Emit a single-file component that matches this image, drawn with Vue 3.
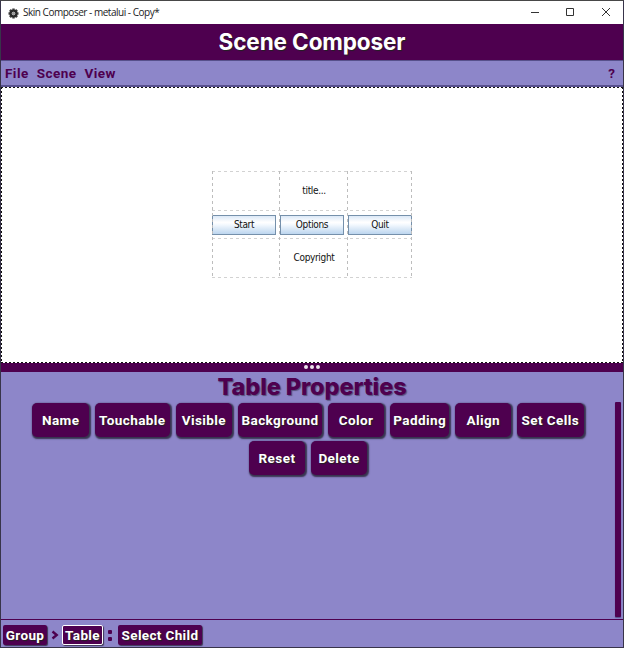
<script setup>
const menus = ['File', 'Scene', 'View']
const cells = [
  { text: '' }, { text: 'title...' }, { text: '' },
  { text: 'Start', button: true }, { text: 'Options', button: true }, { text: 'Quit', button: true },
  { text: '' }, { text: 'Copyright' }, { text: '' },
]
const rows = [
  [
    { text: 'Name', width: 56.5 }, { text: 'Touchable', width: 75.5 }, { text: 'Visible', width: 56.5 },
    { text: 'Background', width: 84.5 }, { text: 'Color', width: 56.5 }, { text: 'Padding', width: 59.5 },
    { text: 'Align', width: 56.5 }, { text: 'Set Cells', width: 66.5 },
  ],
  [{ text: 'Reset', width: 56.5 }, { text: 'Delete', width: 56.5 }],
]
const teeth = [0, 45, 90, 135, 180, 225, 270, 315]
</script>

<template>
  <div class="window">
    <header class="titlebar">
      <svg class="gear" viewBox="0 0 12 12">
        <rect v-for="a in teeth" :key="a" x="4.7" y="0.5" width="2.6" height="3" :transform="`rotate(${a} 6 6)`" fill="#444" />
        <circle cx="6" cy="6" r="3.2" fill="none" stroke="#292929" stroke-width="2.5" />
        <circle cx="6" cy="6" r="1.8" fill="#999" />
      </svg>
      <span class="caption">Skin Composer - metalui - Copy*</span>
      <svg class="controls" viewBox="0 0 84 12" fill="none" stroke="#333">
        <path d="M1 5.5h8M36.5 1.5h7v7h-7zM72 1l8 8M80 1l-8 8" />
      </svg>
    </header>
    <h1 class="banner"><span>Scene Composer</span></h1>
    <nav class="menubar">
      <span v-for="m in menus" :key="m" :class="['menu', m.toLowerCase()]">{{ m }}</span>
      <span class="help">?</span>
    </nav>
    <main class="stage">
      <div class="table">
        <div v-for="(c, i) in cells" :key="i" class="cell">
          <span :class="c.button ? 'metal' : 'label'">{{ c.text }}</span>
        </div>
        <svg class="guides" viewBox="0 0 200 107" fill="none" stroke-dasharray="3 3">
          <path stroke="#d2d2d2" d="M0 .5H200M0 39.5H200M0 67.5H200M0 106.5H200" />
          <path stroke="#bdbdbd" d="M.5 0V107M67.5 0V107M135.5 0V107M199.5 0V107" />
        </svg>
      </div>
    </main>
    <div class="splitter"><i></i><i></i><i></i></div>
    <section class="properties">
      <h2>Table Properties</h2>
      <div class="body">
        <div class="buttons">
          <div v-for="(r, i) in rows" :key="i" class="row">
            <button v-for="b in r" :key="b.text" :style="{ width: b.width + 'px' }">{{ b.text }}</button>
          </div>
        </div>
        <div class="scrollbar"></div>
      </div>
    </section>
    <footer class="path">
      <span class="crumb group">Group</span>
      <svg class="arrow" viewBox="0 0 8 10"><path d="M1.5 1.5L5.7 5L1.5 8.5" fill="none" stroke="#4e004f" stroke-width="2.4" /></svg>
      <span class="crumb current">Table</span>
      <span class="colon"><i></i><i></i></span>
      <span class="crumb child">Select Child</span>
    </footer>
  </div>
</template>

<style>
body { margin: 0; }
</style>

<style scoped>
* { box-sizing: border-box; }
.window {
  width: 624px; height: 648px; overflow: hidden;
  display: flex; flex-direction: column;
  border: 1px solid #38344a; border-top-color: #484848;
  background: #8d86c9; color: #4e004f;
  font-family: Roboto, "Liberation Sans", sans-serif; font-weight: 700;
}
.titlebar { height: 23px; flex: none; display: flex; align-items: center; background: #fff; padding-left: 7px; }
.gear { width: 11px; height: 11px; margin-top: 1px; }
.caption { font: 400 10px/14px "Open Sans", sans-serif; color: #222; margin-left: 4px; margin-top: -1px; letter-spacing: -0.48px; white-space: nowrap; }
.controls { width: 84px; height: 12px; margin-left: auto; margin-right: 9px; }
.banner {
  height: 36px; flex: none; margin: 0; background: #4e004f; color: #fff; text-align: center;
  font: 700 22.5px/36px Inter, sans-serif; letter-spacing: -0.1px; text-shadow: 1px 1px 1px #222;
}
.menubar {
  height: 27px; flex: none; display: flex; align-items: center; padding: 0 8px 0 4px;
  border-top: 1px solid #57508b; border-bottom: 2px solid #59518e;
  font-size: 13.5px; letter-spacing: 0.45px;
}
.menu { margin-right: 8px; }
.help { margin-left: auto; letter-spacing: 0; }
.stage {
  height: 276px; flex: none; padding: 84px 1px 1px;
  display: flex; justify-content: center;
  background:
    repeating-linear-gradient(90deg, #111 0 2px, #fff 2px 4px) top / 100% 1px no-repeat,
    repeating-linear-gradient(90deg, #111 0 2px, #fff 2px 4px) bottom / 100% 1px no-repeat,
    repeating-linear-gradient(#111 0 2px, #fff 2px 4px) left / 1px 100% no-repeat,
    repeating-linear-gradient(#111 0 2px, #fff 2px 4px) right / 1px 100% no-repeat,
    #fff;
}
.table { position: relative; width: 200px; height: 107px; display: grid; grid-template-columns: 68px 68px 64px; grid-template-rows: 39px 28px 40px; }
.cell { display: flex; align-items: center; font: 400 10px/12px "DejaVu Sans Condensed", "DejaVu Sans", sans-serif; font-stretch: condensed; letter-spacing: -0.35px; color: #111; }
.label { width: 100%; text-align: center; }
.metal {
  width: 64px; height: 20px; line-height: 17px; margin-top: 2px; text-align: center; border: 1px solid #7590ab;
  background: linear-gradient(#dce9f7, #fff 35%, #f7fbff 45%, #bdd6ef);
}
.guides { position: absolute; inset: 0; width: 200px; height: 107px; }
.splitter { height: 9px; flex: none; background: #4e004f; display: flex; justify-content: center; align-items: center; gap: 2px; padding-bottom: 1px; }
.splitter i { width: 4px; height: 4px; border-radius: 50%; background: #eee6ee; }
.properties { flex: 1; display: flex; flex-direction: column; }
h2 { height: 30px; margin: 0; text-align: center; font: 800 23.5px/30px Inter, sans-serif; letter-spacing: -0.1px; text-shadow: 1px 1px 1px #55507b; }
.body { flex: 1; display: flex; padding-right: 2px; }
.buttons { flex: 1; padding-top: 1px; display: flex; flex-direction: column; gap: 4px; }
.row { display: flex; justify-content: center; gap: 5.6px; }
button {
  height: 34px; border: 0; border-radius: 5px; padding: 0; background: #4e004f; color: #fff;
  font: 700 13.5px/20px Roboto, sans-serif; letter-spacing: 0.42px; white-space: nowrap; text-shadow: 1px 1px 1px #222;
  box-shadow: 1px 1px 1.5px 0.5px #37334e;
}
.scrollbar { width: 6px; height: 215px; background: #4e004f; border-radius: 1px; box-shadow: 0 1px 1px #57508b; }
.path { height: 28px; flex: none; display: flex; align-items: flex-start; padding: 5px 2px 0; border-top: 1px solid #4e004f; }
.crumb {
  height: 20px; border-radius: 2px; background: #4e004f; color: #fff; text-align: center; font-size: 13.5px; line-height: 20px;
  letter-spacing: 0.35px; text-shadow: 1px 1px 1px #222; box-shadow: 1px 1px 1px #3d3855; white-space: nowrap;
}
.group { width: 44px; }
.arrow { width: 8px; height: 10px; margin: 5px 3px 0 4px; }
.current { width: 41px; border: 1.5px solid #fff; line-height: 18px; }
.colon { display: flex; flex-direction: column; gap: 3px; padding: 5px 6px 0 5px; }
.colon i { width: 4px; height: 4px; background: #4e004f; border-radius: 1px; }
.child { width: 84px; }
</style>
